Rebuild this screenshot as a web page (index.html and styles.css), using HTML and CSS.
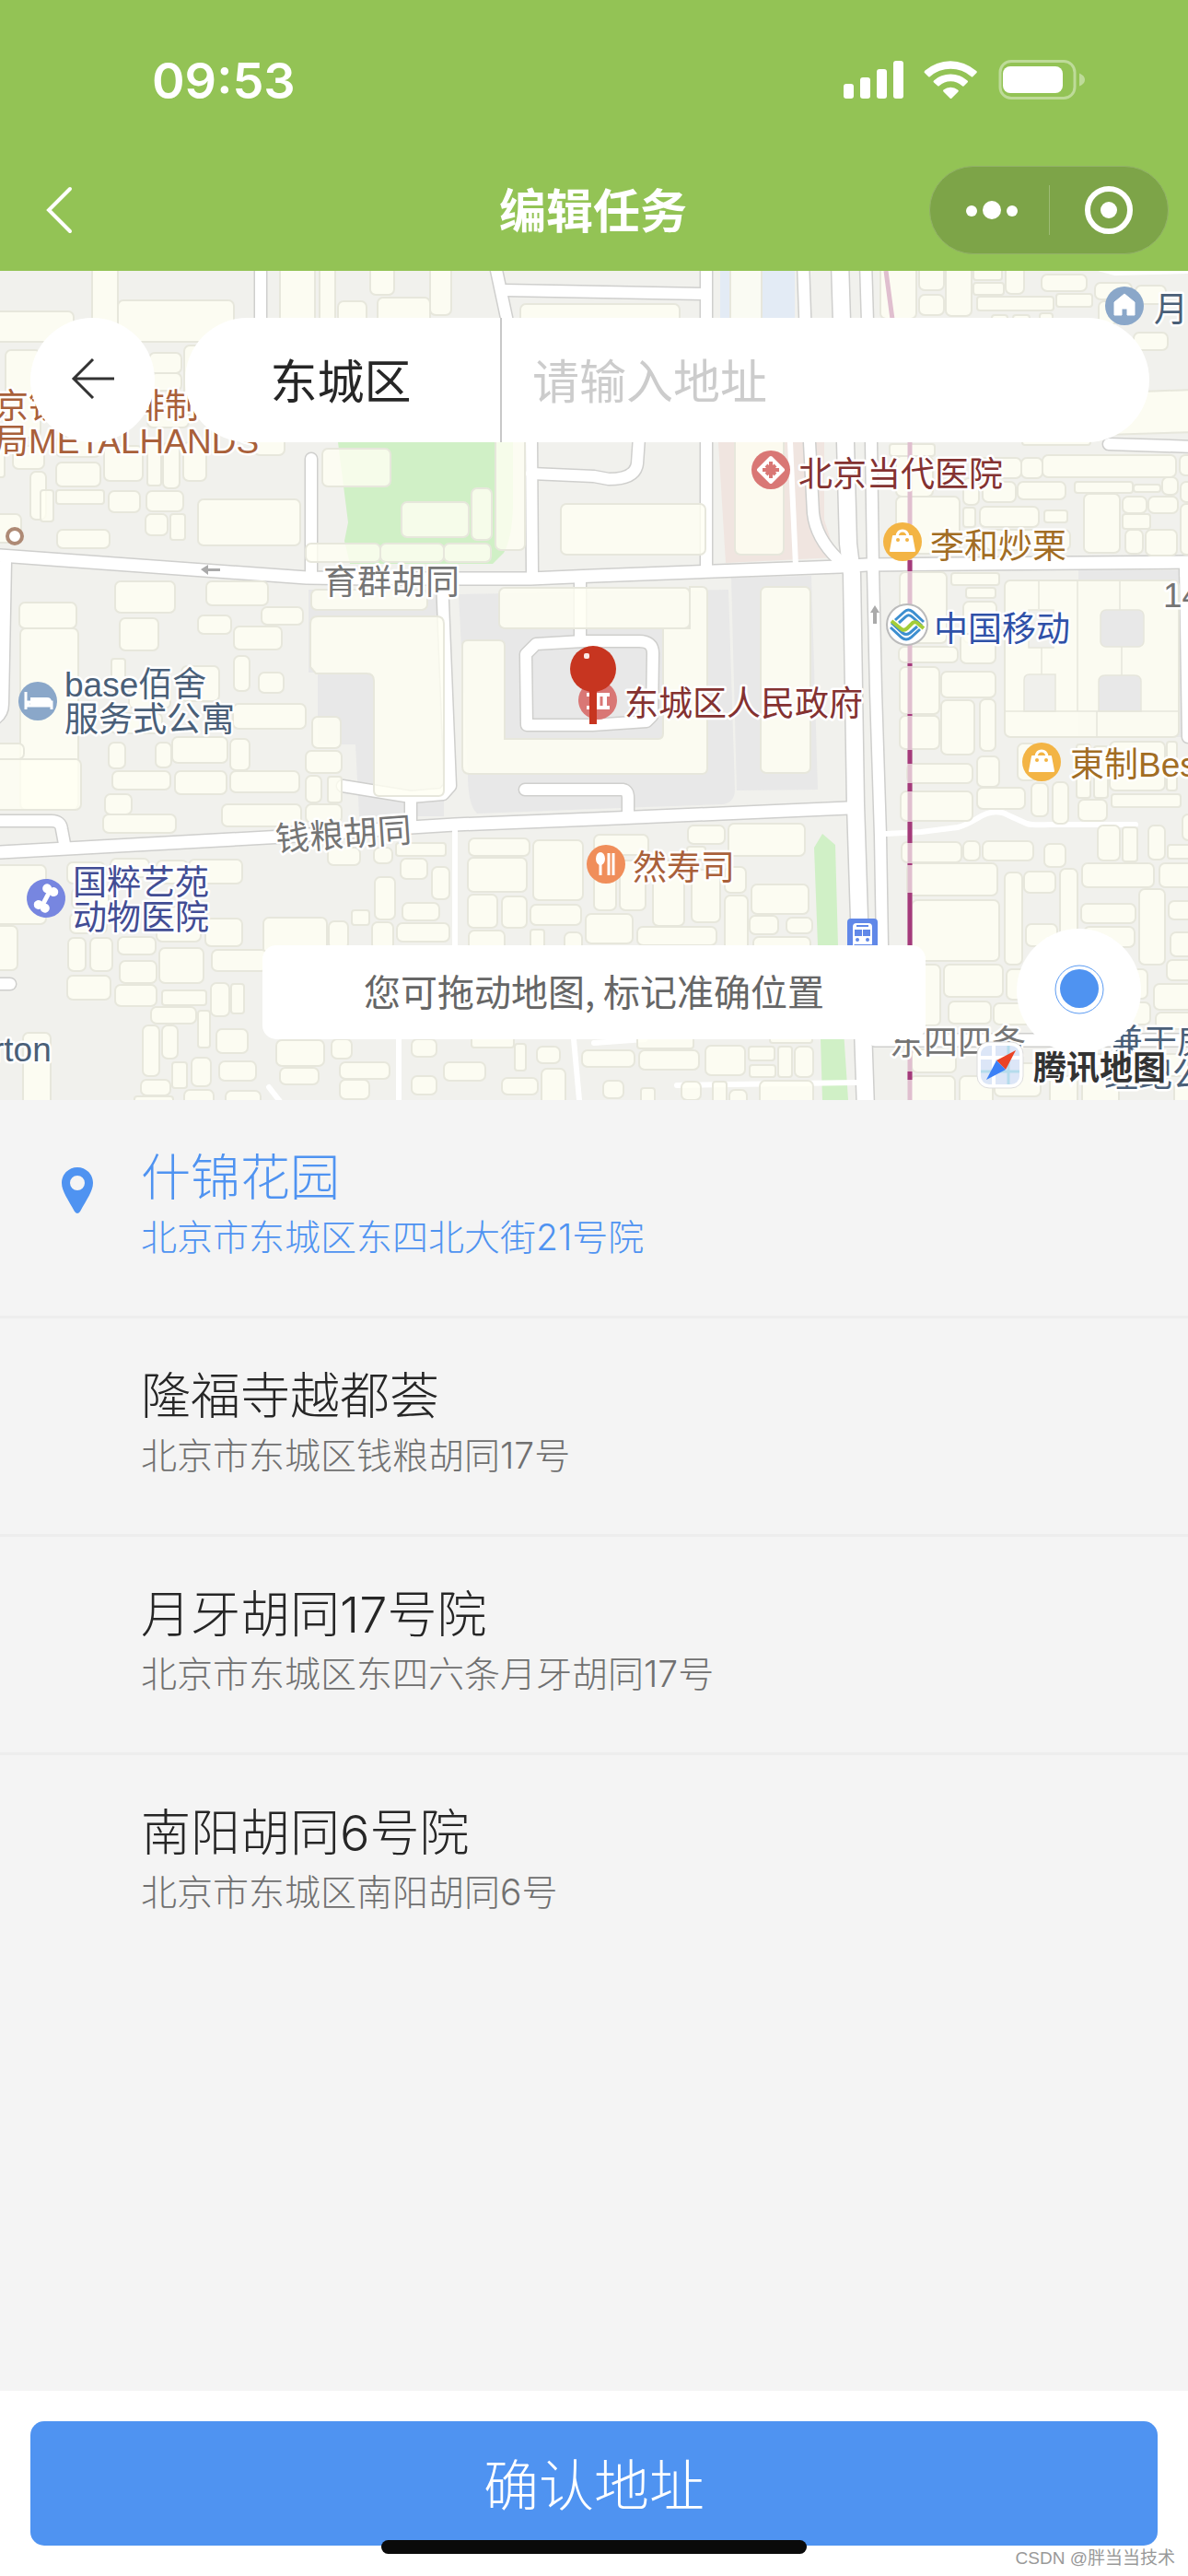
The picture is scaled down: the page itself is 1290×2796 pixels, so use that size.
FILE: index.html
```html
<!DOCTYPE html>
<html lang="zh-CN">
<head>
    <meta charset="UTF-8">
    <meta name="viewport" content="width=device-width, initial-scale=1.0">
    <title>编辑任务</title>
    <link rel="stylesheet" href="styles.css">
</head>
<body>
    <header class="header">
        <div class="status-bar">
            <span class="time">09:53</span>
            <svg class="status-icons" width="262" height="44" viewBox="0 0 262 44" fill="#fff">
                <rect x="0" y="26" width="11" height="16" rx="3"/>
                <rect x="18" y="19" width="11" height="23" rx="3"/>
                <rect x="36" y="10" width="11" height="32" rx="3"/>
                <rect x="54" y="1" width="11" height="41" rx="3"/>
                <path d="M87.500 13.500Q87.500 12.500 88.500 11.500A42 42 0 0 1 143.500 11.500Q145.500 12.500 144.500 14L140.500 18Q139.500 19 138.500 18A34 34 0 0 0 94 18Q93 19 92 18Z"/>
                <path d="M98 22.500A27 27 0 0 1 134.500 22.500Q135.500 23.500 134.500 24.500L130.500 28.500Q129.500 29 128.500 28A18 18 0 0 0 104 28Q103 29 102 28L98 24.500Q97 23.500 98 22.500Z"/>
                <path d="M108.500 32.500A12 12 0 0 1 124 32.500Q125.500 33.500 124.500 34.500L117.500 41.500Q116.500 42.500 115.500 41.500L108.500 34.500Q107.500 33.500 108.500 32.500Z"/>
                <rect x="170" y="1.500" width="81" height="40" rx="12" fill="none" stroke="#fff" stroke-opacity=".4" stroke-width="3"/>
                <rect x="173" y="7" width="65" height="29" rx="8"/>
                <path d="M256 14.500Q262 17 262 21.500T256 28.500Z" fill-opacity=".4"/>
            </svg>
        </div>
        <div class="nav-bar">
            <button type="button" class="nav-back" aria-label="返回">
                <svg width="30" height="52" viewBox="0 0 30 52" fill="none" stroke="#fff" stroke-width="4" stroke-linecap="round"><path d="M27 3L4 26L27 49"/></svg>
            </button>
            <h1>编辑任务</h1>
            <div class="capsule">
                <button type="button" aria-label="更多">
                    <svg width="60" height="20" viewBox="0 0 60 20" fill="#fff"><circle cx="10" cy="11" r="6"/><circle cx="32" cy="10" r="10"/><circle cx="54" cy="11" r="6"/></svg>
                </button>
                <button type="button" aria-label="关闭">
                    <svg width="52" height="52" viewBox="0 0 52 52" fill="#fff"><circle cx="26" cy="26" r="23" fill="none" stroke="#fff" stroke-width="6"/><circle cx="26" cy="26" r="9"/></svg>
                </button>
            </div>
        </div>
    </header>

    <section class="map">
        <svg class="map-canvas" viewBox="0 0 1290 900" preserveAspectRatio="xMidYMid slice">
            <!-- areas -->
            <g fill="#e8e8e8">
                <path d="M335 346H482V592H390L386 514H345V436H335Z"/>
                <path d="M498 351L791 346L798 563Q798 577 785 579L645 584L518 589Q508 580 508 546Z"/>
                <path d="M794 333L881 331L888 563L800 564Z"/>
                <path d="M1171 325H1284L1287 506H1171Z"/>
            </g>
            <g fill="#d0f0c6">
                <path d="M367 186H557V256Q556 290 547 306L535 318H380L374 293L378 273Z"/>
                <path d="M893 611L907 623L910 733L921 900H893L888 733L884 626Z"/>
            </g>
            <path d="M780 186H895V270L908 311L788 317Z" fill="#f0e5e0"/>
            <path d="M782 0H863V60H782Z" fill="#e3ebf5"/>
            <path d="M1192 0H1290V3L1210 5Z" fill="#fff"/>
            <g id="roadEdges" class="road-edges"></g>
            <g id="roads" class="roads"></g>
            <path class="paths" d="M858 186L864 320M962 611L1000 609L1040 604Q1048 602 1060 595Q1080 582 1095 591L1115 600Q1122 602 1140 601H1233M494 606V732M433 834V900M623 834L629 900M292 886L306 904M735 884L929 881M645 838L700 834M1284 319V330"/>
            <g id="buildings" class="buildings">
                <path d="M337 383Q337 375 345 375H474Q482 375 482 383V564Q482 570 476 570H412Q406 570 406 564V445Q406 437 398 437H343L337 430Z"/>
                <path d="M502 407Q502 401 508 401H542Q548 401 548 407V508H715Q720 508 720 502V388H749V343H762Q768 343 768 349V540Q768 546 762 546H510Q502 546 502 538Z"/>
                <path d="M1240 131L1295 129V175L1200 178Z"/>
            </g>
            <g fill="#e8e8e8" stroke="#e6e6dc" stroke-width="1.500">
                <rect x="1195" y="368" width="47" height="40" rx="6"/>
                <path d="M1193 478V446Q1193 439 1200 439H1232Q1239 439 1239 446V478Z"/>
                <path d="M1117 368H1144V409H1117ZM1112 478V444Q1112 438 1118 438H1146V478Z" fill="#f0f0ec"/>
                <path d="M1091 478H1280M1170 336V478M1128 337V367M1131 409V438M1216 337V368M1218 408V439M1191 478V506" fill="none"/>
            </g>
            <g fill="none" stroke-width="5">
                <path d="M962 0L970 60M988 186V900" stroke="#e0bfcf"/>
                <path d="M988 314V326M988 426V429M988 481V483M988 520V535M988 556V565M988 598V621M988 643V645M988 675V733M988 869V878" stroke="#a43a7b"/>
            </g>
            <g fill="#aaa">
                <path d="M218 324L226 319V323H239V326H226V330Z"/>
                <path d="M950 363L955 371H952V383H948V371H945Z"/>
            </g>
            <circle cx="16" cy="288" r="8" fill="#fff" stroke="#ae8a75" stroke-width="4"/>

            <!-- poi icons -->
            <g transform="translate(1221 38)">
                <circle r="21" fill="#8aa7c9"/>
                <path d="M0 -13L11 -4V10H3V3H-3V10H-11V-4Z" fill="#fff" stroke="#fff" stroke-linejoin="round"/>
            </g>
            <g transform="translate(837 216)">
                <circle r="21" fill="#d97775"/>
                <path d="M0 -13L13 0L0 13L-13 0Z" fill="#fff" stroke="#fff" stroke-width="4" stroke-linejoin="round"/>
                <path d="M0 -9V9M-9 0H9M-5 -5L5 5M5 -5L-5 5" stroke="#d97775" stroke-width="4"/>
            </g>
            <g id="bag" transform="translate(980 294)">
                <circle r="21" fill="#f3b444"/>
                <path d="M-10 -6H10L13 10H-13Z" fill="#fff" stroke="#fff" stroke-width="2" stroke-linejoin="round"/>
                <path d="M-6 -6Q-5 -12 0 -12T6 -6" fill="none" stroke="#fff" stroke-width="3"/>
                <circle cx="-5" cy="-2" r="2" fill="#f3b444"/><circle cx="5" cy="-2" r="2" fill="#f3b444"/>
            </g>
            <use href="#bag" x="151" y="239"/>
            <g transform="translate(985 384)">
                <circle r="22" fill="#fff" stroke="#bbb" stroke-width="2"/>
                <g fill="none" stroke="#3d8fd0" stroke-width="3">
                    <path d="M-13 -5L-3 -14Q1 -18 6 -14L18 -3"/>
                    <path d="M-9 -2L-1 -9Q2 -12 6 -8L16 1"/>
                    <path d="M-18 3L-6 14Q-1 18 4 14L14 5"/>
                    <path d="M-17 -2L-5 9Q-1 12 3 9L11 2"/>
                </g>
                <path d="M-17 -4L-6 5Q-3 7 0 4L6 -2Q9 -4 12 -1L18 4" fill="none" stroke="#a4cd38" stroke-width="4"/>
            </g>
            <g transform="translate(649 466)">
                <circle r="21" fill="#d97775"/>
                <path d="M-12 -8H13V-4H10V6H13V10H-12V6H-9V-4H-12Z" fill="#fff"/>
                <path d="M-4 -4V6M4 -4V6" stroke="#d97775" stroke-width="3"/>
            </g>
            <g transform="translate(41 467)">
                <circle r="21" fill="#8aa7c9"/>
                <path d="M-13 -10V9M-13 5H15V9M-10 5V1H15V6" fill="none" stroke="#fff" stroke-width="3"/>
                <path d="M-8 -4H10Q15 -4 15 1V4H-8Z" fill="#fff"/>
            </g>
            <g transform="translate(50 681) rotate(28)">
                <circle r="21" fill="#7786e0"/>
                <path d="M0 -8V8" stroke="#fff" stroke-width="5"/>
                <g fill="#fff"><circle cx="-4" cy="-10" r="5"/><circle cx="4" cy="-10" r="5"/><circle cx="-4" cy="10" r="5"/><circle cx="4" cy="10" r="5"/></g>
            </g>
            <g transform="translate(658 644)">
                <circle r="21" fill="#f08e5a"/>
                <ellipse cx="-6" cy="-6" rx="5" ry="7" fill="#fff"/>
                <path d="M-6 0V12M3 -12V12M8 -12V12" stroke="#fff" stroke-width="3"/>
            </g>
            <g transform="translate(920 703)">
                <rect width="33" height="33" rx="4" fill="#6188e8"/>
                <path d="M6 30V9Q6 5 10 5H23Q27 5 27 9V27Q27 29 25 28H8L5 31" fill="#fff"/>
                <path d="M10 8H23M9 13H15V18H9ZM18 13H24V18H18Z" stroke="#6188e8" stroke-width="2" fill="#6188e8"/>
                <circle cx="11" cy="23" r="2" fill="#6188e8"/><circle cx="22" cy="23" r="2" fill="#6188e8"/>
            </g>

            <!-- labels -->
            <g class="labels">
                <g fill="#a9603a">
                    <text x="-6" y="160">京铁手咖啡制</text>
                    <text x="-6" y="198">局METALHANDS</text>
                    <text x="687" y="661">然寿司</text>
                </g>
                <g fill="#843231">
                    <text x="867" y="234">北京当代医院</text>
                    <text x="678" y="483">东城区人民政府</text>
                </g>
                <g fill="#a26d24">
                    <text x="1010" y="312">李和炒栗</text>
                    <text x="1162" y="549">東制Bes</text>
                </g>
                <text x="1014" y="402" fill="#2f51a8">中国移动</text>
                <g fill="#4a5f78">
                    <text x="1253" y="55">月</text>
                    <text x="70" y="462">base佰舍</text>
                    <text x="70" y="500">服务式公寓</text>
                    <text x="-8" y="858">rton</text>
                    <text x="1204" y="850">兼于房</text>
                    <text x="1199" y="886">经纪公</text>
                </g>
                <g fill="#424d94">
                    <text x="79" y="677">国粹艺苑</text>
                    <text x="79" y="715">动物医院</text>
                </g>
                <g fill="#757575">
                    <text x="351" y="351">育群胡同</text>
                    <text x="300" y="630" transform="rotate(-4 300 630)">钱粮胡同</text>
                    <text x="966" y="851">东四四条</text>
                    <text x="1263" y="365">14</text>
                </g>
            </g>

            <!-- centre pin -->
            <path d="M640 450H648V492H640Z" fill="#c73520"/>
            <circle cx="644" cy="432" r="25" fill="#c73520"/>
            <rect x="634" y="415" width="6" height="6" rx="2" fill="#fbe9e6"/>
        </svg>

        <div class="search-row">
            <button type="button" class="round-button" aria-label="后退">
                <svg width="48" height="44" viewBox="0 0 48 44" fill="none" stroke="#333" stroke-width="3"><path d="M47 22H3M24 1L3 22L24 43"/></svg>
            </button>
            <form class="search-box">
                <button type="button" class="district">东城区</button>
                <input type="text" class="address-input" placeholder="请输入地址" aria-label="请输入地址">
            </form>
        </div>
        <p class="tip">您可拖动地图, 标记准确位置</p>
        <button type="button" class="round-button locate" aria-label="定位">
            <svg width="56" height="56" viewBox="0 0 56 56"><circle cx="28" cy="28" r="26" fill="none" stroke="#5b9bf3" stroke-width="1"/><circle cx="28" cy="27" r="21" fill="#4f93f1"/></svg>
        </button>
        <div class="map-logo">
            <svg width="52" height="52" viewBox="0 0 52 52">
                <rect x="1" y="1" width="50" height="50" rx="13" fill="#fff" stroke="#ddd"/>
                <rect x="5" y="5" width="42" height="42" rx="9" fill="#dce6f7"/>
                <path d="M19 5V47M5 18H47" stroke="#fff" stroke-width="4"/>
                <path d="M35 5V47M5 33H47" stroke="#b5dcec" stroke-width="3"/>
                <path d="M43 10L22 21L32 31Z" fill="#eb4325"/>
                <path d="M22 21L11 42L32 31Z" fill="#3b80f6"/>
            </svg>
            <span>腾讯地图</span>
        </div>
    </section>

    <ul class="address-list">
        <li>
            <a href="#" class="address active">
                <svg class="pin" width="34" height="50" viewBox="0 0 34 50"><path fill-rule="evenodd" d="M17 0C26 0 34 7 34 17C34 26 27 35 20 48Q17 52 14 48C7 35 0 26 0 17C0 7 8 0 17 0ZM17 9A8 8 0 0 0 17 25A8 8 0 0 0 17 9Z" fill="#4f93f1"/></svg>
                <span class="name">什锦花园</span>
                <span class="detail">北京市东城区东四北大街21号院</span>
            </a>
        </li>
        <li>
            <a href="#" class="address">
                <span class="name">隆福寺越都荟</span>
                <span class="detail">北京市东城区钱粮胡同17号</span>
            </a>
        </li>
        <li>
            <a href="#" class="address">
                <span class="name">月牙胡同17号院</span>
                <span class="detail">北京市东城区东四六条月牙胡同17号</span>
            </a>
        </li>
        <li>
            <a href="#" class="address">
                <span class="name">南阳胡同6号院</span>
                <span class="detail">北京市东城区南阳胡同6号</span>
            </a>
        </li>
    </ul>

    <footer class="footer">
        <button type="button" class="confirm">确认地址</button>
        <div class="home-indicator"></div>
        <span class="watermark">CSDN @胖当当技术</span>
    </footer>
    <script src="map.js"></script>
</body>
</html>
```
FILE: styles.css
```css
* {
    box-sizing: border-box;
}
body {
    margin: 0;
    min-height: 100vh;
    display: flex;
    flex-direction: column;
    font-family: "Noto Sans CJK SC", sans-serif;
    background-color: #f4f4f4;
    color: #262626;
}
button {
    border: none;
    padding: 0;
    background: none;
    font-family: inherit;
    color: inherit;
    cursor: pointer;
}
svg {
    display: block;
}

/* header */
.header {
    background-color: #93c355;
    color: white;
}
.status-bar {
    display: flex;
    justify-content: space-between;
    align-items: center;
    height: 162px;
    padding: 12px 112px 0 165px;
}
.time {
    font-family: Inter, sans-serif;
    font-size: 54px;
    font-weight: 600;
}
.nav-bar {
    display: grid;
    grid-template-columns: 1fr auto 1fr;
    align-items: center;
    height: 132px;
    padding: 0 21px 0 49px;
}
.nav-bar h1 {
    margin: 0;
    padding: 0 30px 4px 0;
    font-size: 51px;
    line-height: 72px;
    font-weight: 700;
}
.nav-back {
    justify-self: start;
}
.capsule {
    justify-self: end;
    display: flex;
    width: 260px;
    height: 96px;
    border: 1px solid #93b269;
    border-radius: 48px;
    background-color: #7da448;
}
.capsule button {
    position: relative;
    flex: 1;
    display: flex;
    align-items: center;
    justify-content: center;
}
.capsule button + button::before {
    content: "";
    position: absolute;
    left: 0;
    top: 20px;
    bottom: 20px;
    width: 1px;
    background-color: #9dbb75;
}

/* map */
.map {
    position: relative;
    height: 900px;
    overflow: hidden;
    background-color: #f1f1ed;
}
.map-canvas {
    width: 100%;
    height: 100%;
}
.road-edges, .roads, .paths {
    fill: none;
    stroke-linecap: round;
    stroke-linejoin: round;
}
.road-edges {
    stroke: #cfcfcd;
}
.roads, .paths {
    stroke: white;
}
.paths {
    stroke-width: 6px;
}
.buildings {
    fill: #fffff2;
    fill-opacity: 0.8;
    stroke: #e7e7dc;
    stroke-width: 2px;
}
.labels {
    font-family: "Liberation Sans", "Noto Sans CJK SC", sans-serif;
    font-size: 37px;
    stroke: white;
    stroke-width: 5px;
    stroke-linejoin: round;
    paint-order: stroke;
}
.search-row {
    position: absolute;
    top: 51px;
    left: 33px;
    right: 42px;
    display: flex;
    gap: 33px;
}
.round-button {
    flex: none;
    display: flex;
    align-items: center;
    justify-content: center;
    width: 135px;
    height: 135px;
    padding-bottom: 4px;
    border-radius: 50%;
    background-color: white;
}
.search-box {
    flex: 1;
    display: flex;
    height: 135px;
    border-radius: 68px;
    background-color: white;
    overflow: hidden;
}
.district {
    width: 344px;
    padding: 0 4px 4px 0;
    border-right: 2px solid #c8c8c8;
    font-size: 51px;
}
.address-input {
    flex: 1;
    min-width: 0;
    border: none;
    outline: none;
    padding: 0 33px 4px;
    font-family: inherit;
    font-size: 51px;
    background: none;
}
.address-input::placeholder {
    color: #ccc;
}
.tip {
    position: absolute;
    left: 50%;
    bottom: 66px;
    transform: translateX(-50%);
    width: 720px;
    margin: 0;
    padding-bottom: 4px;
    border-radius: 15px;
    background-color: white;
    color: #666;
    font-size: 40px;
    line-height: 98px;
    text-align: center;
    white-space: nowrap;
}
.locate {
    position: absolute;
    right: 51px;
    bottom: 51px;
}
.map-logo {
    position: absolute;
    right: 24px;
    bottom: 12px;
    display: flex;
    align-items: center;
    gap: 10px;
    color: #333;
    font-size: 36px;
    line-height: 52px;
    font-weight: 700;
}
.map-logo span {
    -webkit-text-stroke: 6px white;
    paint-order: stroke;
}

/* address list */
.address-list {
    flex: 1;
    margin: 0;
    padding: 0;
    list-style: none;
}
.address-list li + li {
    border-top: 3px solid #ededed;
}
.address {
    position: relative;
    display: flex;
    flex-direction: column;
    height: 234px;
    padding: 50px 33px 0 153px;
    color: #262626;
    font-family: Inter, "Noto Sans CJK SC", sans-serif;
    font-weight: 300;
    text-decoration: none;
}
.name {
    font-size: 54px;
    line-height: 70px;
}
.detail {
    color: #707070;
    font-size: 39px;
    line-height: 58px;
}
.active, .active .detail {
    color: #4f93f1;
}
.pin {
    position: absolute;
    left: 67px;
    top: 73px;
}

/* footer */
.footer {
    position: relative;
    height: 201px;
    padding: 33px;
    background-color: white;
}
.confirm {
    width: 100%;
    height: 135px;
    padding-bottom: 4px;
    border-radius: 15px;
    background-color: #4f93f1;
    color: white;
    font-size: 60px;
    font-weight: 300;
}
.home-indicator {
    position: absolute;
    left: 50%;
    bottom: 24px;
    transform: translateX(-50%);
    width: 462px;
    height: 15px;
    border-radius: 8px;
    background-color: #0a0a0a;
}
.watermark {
    position: absolute;
    right: 14px;
    bottom: 4px;
    color: #999;
    font-family: "Liberation Sans", "Noto Sans CJK SC", sans-serif;
    font-size: 19px;
    line-height: 30px;
}
```
FILE: map.js
```js
const SVG_NS = "http://www.w3.org/2000/svg";

// [width, path]
const roads = [
    [12, "M283 -10V80"],
    [13, "M-10 309L0 309L333 333L400 334H576L645 331L912 321L941 319L1300 316"],
    [12, "M6 316L3 470Q3 480 -5 486"],
    [12, "M338 204V333"],
    [12, "M577 180L578 330"],
    [12, "M577 220L645 223L661 226Q690 226 692 209L694 180"],
    [12, "M537 -10L552 60"],
    [12, "M549 21L764 25"],
    [12, "M767 -10V325"],
    [12, "M872 -10L879 186L883 263Q886 290 910 313"],
    [18, "M912 -10L918 186L921 296L925 329L929 579L934 733L940 910"],
    [12, "M940 -10L946 186L948 323L951 456L956 613L958 733V760"],
    [12, "M480 335L489 559L481 568L446 571L372 559"],
    [12, "M446 571V600"],
    [13, "M-10 632L0 631L308 614L446 604L494 601L645 595L921 583"],
    [12, "M-10 597H56Q66 597 67 606L70 622"],
    [12, "M570 563H676Q682 564 682 572V588"],
    [12, "M571 416L582 405L633 402H694Q709 402 709 415L708 483L702 489L643 493H572Z"],
    [12, "M630 335V402"],
    [12, "M1287 319L1290 506"],
    [12, "M1204 188L1300 191"],
    [13, "M950 835H1300"],
    [12, "M-10 774H11"]
];

// [x, y, width, height]
const buildings = [
    [-5, 44, 85, 33], [100, -5, 28, 82], [80, 60, 20, 17], [128, 32, 126, 45], [304, -5, 38, 70], [347, -5, 17, 70],
    [367, 33, 31, 30], [402, -5, 26, 31], [410, 29, 57, 30], [467, -5, 23, 53], [565, 36, 173, 34],
    [6, 86, 38, 95], [162, 89, 35, 22], [164, 111, 33, 19], [200, 81, 30, 60], [160, 150, 45, 20],
    [-5, 186, 10, 38], [14, 190, 34, 25], [61, 180, 48, 22], [61, 208, 48, 26], [113, 190, 42, 38], [160, 186, 15, 47],
    [177, 186, 18, 50], [199, 186, 25, 42], [276, 180, 33, 20], [33, 218, 17, 52], [44, 238, 14, 34], [61, 238, 52, 15],
    [118, 239, 34, 23], [159, 239, 40, 22], [158, 264, 24, 23], [185, 264, 16, 28], [62, 281, 57, 20], [-5, 264, 28, 31],
    [215, 248, 111, 50], [350, 193, 74, 41], [436, 251, 73, 38], [512, 236, 22, 56], [538, 180, 32, 123],
    [332, 296, 81, 20], [413, 296, 69, 20], [482, 296, 51, 20], [609, 253, 157, 55],
    [125, 337, 65, 34], [224, 337, 67, 26], [284, 365, 45, 19], [215, 374, 36, 20], [254, 386, 52, 25], [130, 377, 42, 35],
    [21, 360, 62, 28], [22, 388, 63, 197], [121, 421, 15, 25], [197, 429, 41, 38], [254, 418, 17, 38], [281, 436, 27, 22],
    [338, 346, 126, 22], [542, 344, 207, 44], [826, 343, 54, 202], [-5, 513, 31, 17], [-5, 530, 93, 55],
    [253, 470, 79, 27], [140, 450, 45, 25], [120, 480, 56, 22], [187, 506, 60, 28], [250, 508, 21, 34], [169, 512, 17, 27],
    [118, 512, 18, 28], [122, 543, 63, 20], [190, 543, 56, 25], [250, 543, 75, 23], [114, 568, 29, 22], [112, 590, 79, 20],
    [241, 579, 86, 24], [339, 484, 31, 34], [332, 521, 39, 24], [332, 548, 17, 29], [356, 549, 15, 28], [332, 579, 39, 20],
    [-5, 645, 55, 64], [73, 642, 41, 23], [120, 638, 42, 20], [170, 640, 34, 25], [205, 639, 58, 26], [78, 670, 40, 22],
    [76, 697, 40, 22], [356, 626, 35, 19], [406, 626, 20, 17], [430, 621, 54, 14], [435, 638, 29, 22], [469, 647, 19, 35],
    [407, 658, 22, 46], [437, 686, 40, 19], [431, 708, 57, 20], [382, 694, 19, 16], [404, 707, 23, 30], [357, 706, 21, 30],
    [286, 702, 69, 40], [223, 703, 40, 30], [170, 690, 48, 38], [509, 616, 66, 19], [508, 637, 64, 37], [579, 618, 54, 65],
    [508, 677, 32, 36], [545, 679, 27, 34], [576, 688, 55, 22], [509, 716, 39, 30], [576, 715, 15, 30], [613, 718, 19, 30],
    [636, 698, 51, 32], [74, 724, 19, 36], [98, 724, 24, 36], [128, 723, 41, 19], [130, 749, 40, 24], [173, 735, 48, 38],
    [230, 737, 60, 23], [73, 765, 47, 26], [125, 775, 45, 23], [176, 781, 48, 16], [229, 773, 20, 36], [251, 774, 14, 32],
    [164, 799, 49, 18], [215, 803, 13, 40], [155, 819, 18, 55], [176, 819, 17, 36], [235, 823, 34, 26], [187, 859, 16, 28],
    [208, 854, 21, 31], [238, 858, 40, 21], [153, 878, 32, 17], [200, 889, 32, 20], [245, 890, 38, 20], [146, 896, 42, 10],
    [25, 827, 30, 80], [-5, 711, 24, 48], [300, 835, 52, 28], [304, 865, 42, 18], [360, 834, 22, 21], [369, 859, 54, 18],
    [369, 878, 32, 21], [447, 834, 27, 19], [482, 859, 45, 20], [447, 874, 27, 20], [512, 830, 46, 13], [559, 839, 12, 29],
    [583, 842, 25, 18], [545, 876, 39, 18], [588, 866, 26, 40], [632, 846, 57, 18], [645, 612, 59, 22], [747, 602, 40, 20],
    [791, 600, 83, 35], [746, 625, 20, 14], [645, 640, 24, 54], [673, 640, 28, 54], [709, 640, 34, 71], [751, 650, 31, 57],
    [787, 647, 23, 28], [787, 678, 25, 60], [816, 666, 62, 32], [814, 700, 31, 20], [854, 702, 28, 17], [692, 712, 86, 20],
    [818, 723, 62, 20], [692, 828, 61, 16], [694, 846, 65, 21], [766, 841, 43, 32], [813, 842, 28, 15], [814, 862, 28, 13],
    [845, 842, 15, 33], [863, 842, 20, 33], [836, 828, 46, 10], [740, 880, 21, 20], [774, 880, 15, 30], [655, 879, 22, 19],
    [696, 887, 15, 20], [792, 889, 19, 20], [825, 879, 58, 30],
    [793, -5, 34, 70], [798, 180, 53, 128], [956, -5, 39, 57], [998, -5, 27, 26], [998, 26, 27, 22], [1027, -5, 28, 54],
    [1057, -5, 31, 15], [1057, 13, 33, 13], [1092, -5, 20, 30], [1061, 28, 83, 15], [1147, 25, 39, 14], [1131, 4, 49, 18],
    [1189, 13, 40, 18], [1233, 16, 33, 20], [1193, 33, 20, 25], [1231, 67, 37, 19], [1129, 46, 14, 10], [1077, 48, 17, 10],
    [1100, 48, 18, 10], [966, 188, 49, 13], [973, 201, 40, 44], [973, 245, 69, 62], [1110, 180, 74, 9], [1060, 203, 49, 22],
    [1109, 203, 23, 22], [1132, 200, 145, 24], [1281, 200, 20, 22], [1046, 225, 17, 29], [1067, 229, 36, 22],
    [1105, 229, 52, 19], [1167, 229, 63, 12], [1231, 232, 29, 8], [1262, 224, 17, 19], [1046, 257, 13, 21],
    [1064, 256, 64, 22], [1134, 260, 25, 13], [1070, 281, 92, 22], [1177, 242, 39, 64], [1219, 245, 26, 18],
    [1247, 245, 32, 18], [1219, 264, 30, 16], [1222, 281, 19, 26], [1244, 281, 34, 28], [1282, 229, 20, 22],
    [1282, 253, 20, 55], [977, 327, 51, 77], [1033, 328, 52, 13], [1049, 344, 32, 11], [1046, 359, 36, 45],
    [1043, 394, 38, 32], [976, 408, 64, 17], [1091, 336, 189, 170], [977, 430, 43, 51], [1022, 435, 59, 28],
    [1022, 466, 36, 59], [1064, 465, 17, 56], [977, 483, 43, 36], [985, 535, 71, 21], [1061, 527, 24, 33], [978, 565, 78, 32],
    [1061, 561, 52, 23], [1120, 556, 18, 36], [1143, 555, 17, 45], [1169, 514, 15, 58], [1188, 516, 15, 56],
    [1205, 511, 60, 53], [1267, 511, 11, 53], [1207, 568, 75, 14], [1171, 574, 31, 23], [1192, 602, 24, 38],
    [1219, 604, 16, 37], [1247, 602, 18, 37], [1268, 623, 30, 15], [1284, 590, 20, 28], [1105, 513, 20, 40],
    [979, 620, 65, 22], [1046, 619, 18, 21], [1067, 619, 55, 21], [1134, 622, 23, 25], [985, 643, 98, 35],
    [1091, 653, 19, 100], [1112, 652, 34, 23], [1151, 649, 19, 80], [1175, 643, 78, 26], [1259, 643, 40, 26],
    [990, 683, 95, 66], [1114, 709, 34, 24], [1174, 687, 59, 21], [1177, 712, 55, 22], [1237, 671, 28, 82],
    [1269, 684, 30, 20], [1271, 718, 30, 26], [1267, 748, 30, 22], [1253, 774, 45, 28], [1255, 805, 45, 18],
    [990, 753, 31, 66], [1025, 753, 64, 35], [1030, 793, 46, 24], [1093, 758, 30, 33], [1079, 795, 50, 23],
    [1220, 758, 26, 32], [1225, 794, 24, 24], [990, 845, 48, 25], [988, 874, 49, 35], [1042, 874, 36, 35],
    [1080, 860, 50, 36], [1140, 874, 30, 35], [1175, 850, 40, 60], [1245, 850, 45, 24], [1275, 880, 20, 30]
];

function addShape(parent, tag, attrs) {
    const shape = document.createElementNS(SVG_NS, tag);
    for (let name in attrs) {
        shape.setAttribute(name, attrs[name]);
    }
    parent.appendChild(shape);
}

roads.forEach(([width, d]) => {
    addShape(document.getElementById("roadEdges"), "path", { d: d, "stroke-width": width + 3 });
    addShape(document.getElementById("roads"), "path", { d: d, "stroke-width": width });
});

buildings.forEach(([x, y, width, height]) => {
    // small blocks are rounder than the long ones
    const rx = Math.min(width, height) > 16 ? 6 : 3;
    addShape(document.getElementById("buildings"), "rect", { x, y, width, height, rx });
});
```
